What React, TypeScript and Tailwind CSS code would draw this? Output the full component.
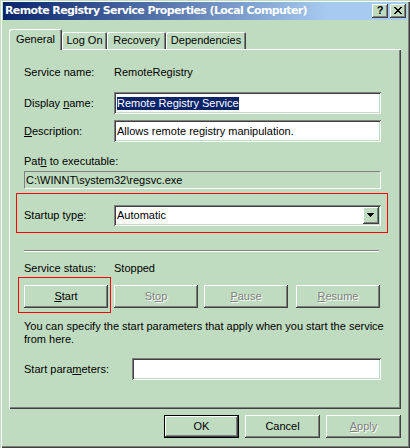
import React from "react";

const raised =
  "shadow-[inset_-1px_-1px_0_#404040,inset_1px_1px_0_#ffffff,inset_-2px_-2px_0_#808080]";
const sunken =
  "shadow-[inset_1px_1px_0_#808080,inset_-1px_-1px_0_#ffffff,inset_2px_2px_0_#404040,inset_-2px_-2px_0_#c0dcc0]";
const disabledText = "text-[#808080] [text-shadow:1px_1px_0_#ffffff]";

function U({ children }: { children: React.ReactNode }) {
  return <span className="underline underline-offset-[1px]">{children}</span>;
}

function Btn({
  children,
  w,
  disabled,
  def,
}: {
  children: React.ReactNode;
  w: string;
  disabled?: boolean;
  def?: boolean;
}) {
  if (def) {
    return (
      <div className={`${w} h-[23px] border border-black bg-[#c0dcc0]`}>
        <div className={`w-full h-full flex items-center justify-center ${raised}`}>
          {children}
        </div>
      </div>
    );
  }
  return (
    <div
      className={`${w} h-[23px] flex items-center justify-center bg-[#c0dcc0] ${raised} ${
        disabled ? disabledText : "text-black"
      }`}
    >
      {children}
    </div>
  );
}

export default function App() {
  return (
    <div className="w-[410px] h-[448px] bg-[#c0dcc0] relative overflow-hidden font-['Liberation_Sans',Arial,sans-serif] text-[11px] leading-[13px] text-black shadow-[inset_1px_1px_0_#c0dcc0,inset_2px_2px_0_#ffffff,inset_-1px_-1px_0_#404040,inset_-2px_-2px_0_#808080]">
      {/* Title bar */}
      <div className="ml-[3px] pt-[2px]">
        <div className="w-[404px] h-[18px] flex items-center bg-[linear-gradient(to_right,#0a246a,#a6caf0_80%)]">
          <span className="ml-[2px] text-white font-bold text-[11px] leading-[14px] font-['DejaVu_Sans',sans-serif] tracking-[-0.6px]">
            Remote Registry Service Properties (Local Computer)
          </span>
          <div className="ml-auto mr-[1px] flex gap-[2px]">
            <div
              className={`w-[16px] h-[14px] bg-[#c0dcc0] ${raised} flex items-center justify-center font-bold text-[11px] leading-[11px] pb-[1px]`}
            >
              ?
            </div>
            <div
              className={`w-[16px] h-[14px] bg-[#c0dcc0] ${raised} flex items-center justify-center pb-[1px] pr-[1px]`}
            >
              <svg width="8" height="7" viewBox="0 0 8 7" shapeRendering="crispEdges">
                <path
                  d="M0 0h2v1h1v1h2V1h1V0h2v1H7v1H6v1H5v1h1v1h1v1h1v1H6V6H5V5H3v1H2v1H0V6h1V5h1V4h1V3H2V2H1V1H0z"
                  fill="#000"
                />
              </svg>
            </div>
          </div>
        </div>
      </div>

      {/* Body */}
      <div className="pl-[9px]">
        {/* Tabs */}
        <div className="mt-[9px] h-[21px] flex items-end relative z-10">
          <div
            className={`w-[53px] h-[21px] bg-[#c0dcc0] rounded-t-[2px] flex justify-center pt-[4px] shadow-[inset_1px_1px_0_#ffffff,inset_-1px_0_0_#404040,inset_-2px_0_0_#808080]`}
          >
            General
          </div>
          <div className="w-[45px] h-[17px] mb-[1px] rounded-t-[2px] flex justify-center pt-[2px] shadow-[inset_1px_1px_0_#ffffff,inset_-1px_0_0_#404040,inset_-2px_0_0_#808080]">
            Log On
          </div>
          <div className="w-[59px] h-[17px] mb-[1px] rounded-t-[2px] flex justify-center pt-[2px] shadow-[inset_1px_1px_0_#ffffff,inset_-1px_0_0_#404040,inset_-2px_0_0_#808080]">
            Recovery
          </div>
          <div className="w-[80px] h-[17px] mb-[1px] rounded-t-[2px] flex justify-center pt-[2px] shadow-[inset_1px_1px_0_#ffffff,inset_-1px_0_0_#404040,inset_-2px_0_0_#808080]">
            Dependencies
          </div>
        </div>

        {/* Panel */}
        <div className="-mt-[1px] w-[392px] h-[360px] shadow-[inset_1px_1px_0_#ffffff,inset_-1px_-1px_0_#404040,inset_-2px_-2px_0_#808080] flex flex-col pl-[15px] pt-[1px]">
          <div className="mt-[16px] h-[13px] flex">
            <div className="w-[90px]">Service name:</div>
            <div>RemoteRegistry</div>
          </div>

          <div className="mt-[13px] flex items-center">
            <div className="w-[90px]">
              Display <U>n</U>ame:
            </div>
            <div className={`w-[267px] h-[22px] bg-white ${sunken} flex items-center pl-[3px]`}>
              <span className="bg-[#0a246a] text-white">Remote Registry Service</span>
            </div>
          </div>

          <div className="mt-[6px] flex items-center">
            <div className="w-[90px]">
              <U>D</U>escription:
            </div>
            <div className={`w-[267px] h-[22px] bg-white ${sunken} flex items-center pl-[3px]`}>
              Allows remote registry manipulation.
            </div>
          </div>

          <div className="mt-[13px] h-[13px]">
            Pat<U>h</U> to executable:
          </div>
          <div className="mt-[3px] w-[357px] h-[18px] border border-t-[#808080] border-l-[#808080] border-b-white border-r-white flex items-center pl-[1px]">
            C:\WINNT\system32\regsvc.exe
          </div>

          {/* Startup type (highlighted) */}
          <div className="mt-[4px] -ml-[8px] w-[372px] h-[40px] border border-[#ff0000] flex items-start pt-[11px] pl-[7px]">
            <div className="w-[90px] h-[21px] flex items-center">
              Startup typ<U>e</U>:
            </div>
            <div className={`w-[267px] h-[21px] bg-white ${sunken} flex items-center pl-[3px] pr-[2px]`}>
              <span>Automatic</span>
              <div
                className={`ml-auto w-[16px] h-[17px] bg-[#c0dcc0] ${raised} flex items-center justify-center pr-[1px] pb-[1px]`}
              >
                <svg width="7" height="4" viewBox="0 0 7 4" shapeRendering="crispEdges">
                  <path d="M0 0h7v1H6v1H5v1H4v1H3V3H2V2H1V1H0z" fill="#000" />
                </svg>
              </div>
            </div>
          </div>

          <div className="mt-[17px] w-[355px] h-[2px] border-t border-t-[#808080] border-b border-b-white" />

          <div className="mt-[10px] h-[13px] flex">
            <div className="w-[90px]">Service status:</div>
            <div>Stopped</div>
          </div>

          <div className="mt-[10px] flex">
            <div className="relative">
              <Btn w="w-[84px]">
                <U>S</U>tart
              </Btn>
              <div className="absolute left-[-6px] top-[-8px] w-[93px] h-[36px] border border-[#ff0000]" />
            </div>
            <div className="ml-[6px]">
              <Btn w="w-[84px]" disabled>
                St<U>o</U>p
              </Btn>
            </div>
            <div className="ml-[6px]">
              <Btn w="w-[84px]" disabled>
                <U>P</U>ause
              </Btn>
            </div>
            <div className="ml-[8px]">
              <Btn w="w-[84px]" disabled>
                <U>R</U>esume
              </Btn>
            </div>
          </div>

          <div className="mt-[12px] w-[360px]">
            You can specify the start parameters that apply when you start the service from here.
          </div>

          <div className="mt-[12px] flex items-center">
            <div className="w-[108px]">
              Start para<U>m</U>eters:
            </div>
            <div className={`w-[249px] h-[22px] bg-white ${sunken}`} />
          </div>
        </div>

        {/* Dialog buttons */}
        <div className="mt-[6px] ml-[155px] flex gap-[6px]">
          <Btn w="w-[75px]" def>
            OK
          </Btn>
          <Btn w="w-[75px]">Cancel</Btn>
          <Btn w="w-[75px]" disabled>
            <U>A</U>pply
          </Btn>
        </div>
      </div>
    </div>
  );
}
